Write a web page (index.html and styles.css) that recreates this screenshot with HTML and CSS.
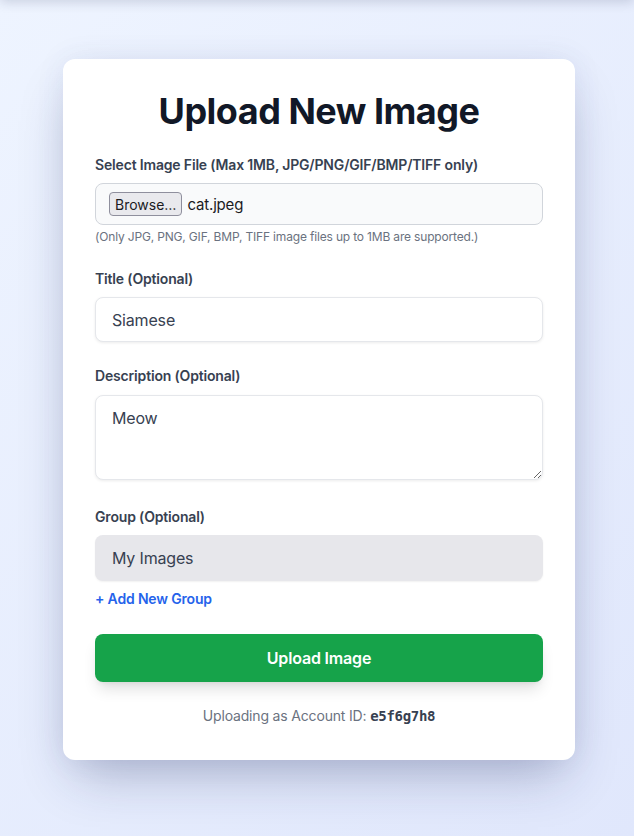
FILE: index.html
```html
<!DOCTYPE html>
<html lang="en">
<head>
<meta charset="utf-8">
<title>Upload New Image</title>
<link rel="stylesheet" href="styles.css">
</head>
<body>
<div class="topbar"></div>
<main class="page">
  <div class="card">
    <h1 class="title">Upload New Image</h1>
    <form class="form">
      <div class="group">
        <label class="label">Select Image File (Max 1MB, JPG/PNG/GIF/BMP/TIFF only)</label>
        <div class="file-input">
          <span class="browse">Browse…</span>
          <span class="file-name">cat.jpeg</span>
        </div>
        <p class="help">(Only JPG, PNG, GIF, BMP, TIFF image files up to 1MB are supported.)</p>
      </div>
      <div class="group">
        <label class="label" for="title">Title (Optional)</label>
        <input class="field" id="title" type="text" value="Siamese">
      </div>
      <div class="group">
        <label class="label" for="desc">Description (Optional)</label>
        <textarea class="field area" id="desc" rows="3">Meow</textarea>
      </div>
      <div class="group">
        <label class="label" for="grp">Group (Optional)</label>
        <div class="select">My Images</div>
        <a class="add-link" href="#">+ Add New Group</a>
      </div>
      <button class="submit" type="button">Upload Image</button>
    </form>
    <p class="account">Uploading as Account ID: <code class="acc-id">e5f6g7h8</code></p>
  </div>
</main>
</body>
</html>
```
FILE: styles.css
```css
* { box-sizing: border-box; }
html, body { margin: 0; padding: 0; }
body {
  min-height: 836px;
  font-family: Inter, "Noto Sans", sans-serif;
  letter-spacing: -0.17px;
  background: linear-gradient(135deg, #eef4ff 0%, #e0e7fc 100%);
  overflow: hidden;
}
.topbar {
  position: fixed;
  top: -20px; left: 0; right: 0;
  height: 20px;
  box-shadow: 0 2px 12px rgba(30, 40, 80, 0.18);
}
.page {
  display: flex;
  justify-content: center;
  padding: 59px 0 0 4px;
}
.card {
  width: 512px;
  background: #fff;
  border-radius: 12px;
  padding: 32px 32px 34px;
  box-shadow: 0 25px 50px -12px rgba(30, 40, 90, 0.3), 0 0 30px rgba(60, 80, 140, 0.08);
}
.title {
  margin: 0 0 24px;
  font-size: 36px;
  line-height: 40px;
  font-weight: 700;
  text-align: center;
  color: #111827;
  letter-spacing: -0.5px;
}
.form { display: flex; flex-direction: column; }
.group { display: flex; flex-direction: column; margin-bottom: 24px; }
.label {
  font-size: 14px;
  line-height: 20px;
  font-weight: 600;
  color: #374151;
  margin-bottom: 8px;
}
.file-input {
  display: flex;
  align-items: center;
  height: 42px;
  padding: 0 13px;
  border: 1px solid #d1d5db;
  border-radius: 8px;
  background: #f9fafb;
}
.browse {
  display: inline-flex;
  align-items: center;
  height: 24px;
  padding: 0 5px;
  border: 1px solid #8f8f9d;
  border-radius: 4px;
  background: #e9e9ed;
  font-size: 14px;
  letter-spacing: 0;
  color: #1b1b1f;
}
.file-name {
  margin-left: 5px;
  font-size: 15px;
  color: #1b1b1f;
}
.help {
  margin: 4px 0 0;
  font-size: 12px;
  line-height: 16px;
  color: #6b7280;
}
.field {
  display: block;
  width: 100%;
  height: 45px;
  padding: 12px 16px;
  border: 1px solid #e5e7eb;
  border-radius: 8px;
  background: #fff;
  font-family: inherit;
  font-size: 16px;
  line-height: 19px;
  letter-spacing: -0.17px;
  color: #374151;
  box-shadow: 0 1px 3px rgba(0, 0, 0, 0.08);
  outline: none;
}
.area {
  height: 85px;
  margin-top: 1px;
  padding-top: 13px;
  resize: vertical;
  margin-bottom: 3px;
}
.select {
  height: 46px;
  display: flex;
  align-items: center;
  padding: 0 17px;
  background: #e7e7eb;
  border-radius: 8px;
  font-size: 16px;
  color: #374151;
  box-shadow: 0 1px 2px rgba(0, 0, 0, 0.06);
}
.add-link {
  margin-top: 8px;
  font-size: 14px;
  line-height: 20px;
  font-weight: 600;
  color: #2563eb;
  text-decoration: none;
  align-self: flex-start;
}
.submit {
  margin-top: 1px;
  height: 48px;
  border: none;
  border-radius: 8px;
  background: #16a34a;
  color: #fff;
  font-family: inherit;
  font-size: 16px;
  font-weight: 600;
  letter-spacing: -0.17px;
  box-shadow: 0 10px 15px -3px rgba(0, 0, 0, 0.12), 0 4px 6px -4px rgba(0, 0, 0, 0.1);
}
.account {
  margin: 24px 0 0;
  text-align: center;
  font-size: 14px;
  line-height: 20px;
  color: #6b7280;
}
.acc-id {
  font-family: "DejaVu Sans Mono", "Liberation Mono", monospace;
  font-weight: 700;
  font-size: 14px;
  letter-spacing: -0.3px;
  color: #374151;
}
```
